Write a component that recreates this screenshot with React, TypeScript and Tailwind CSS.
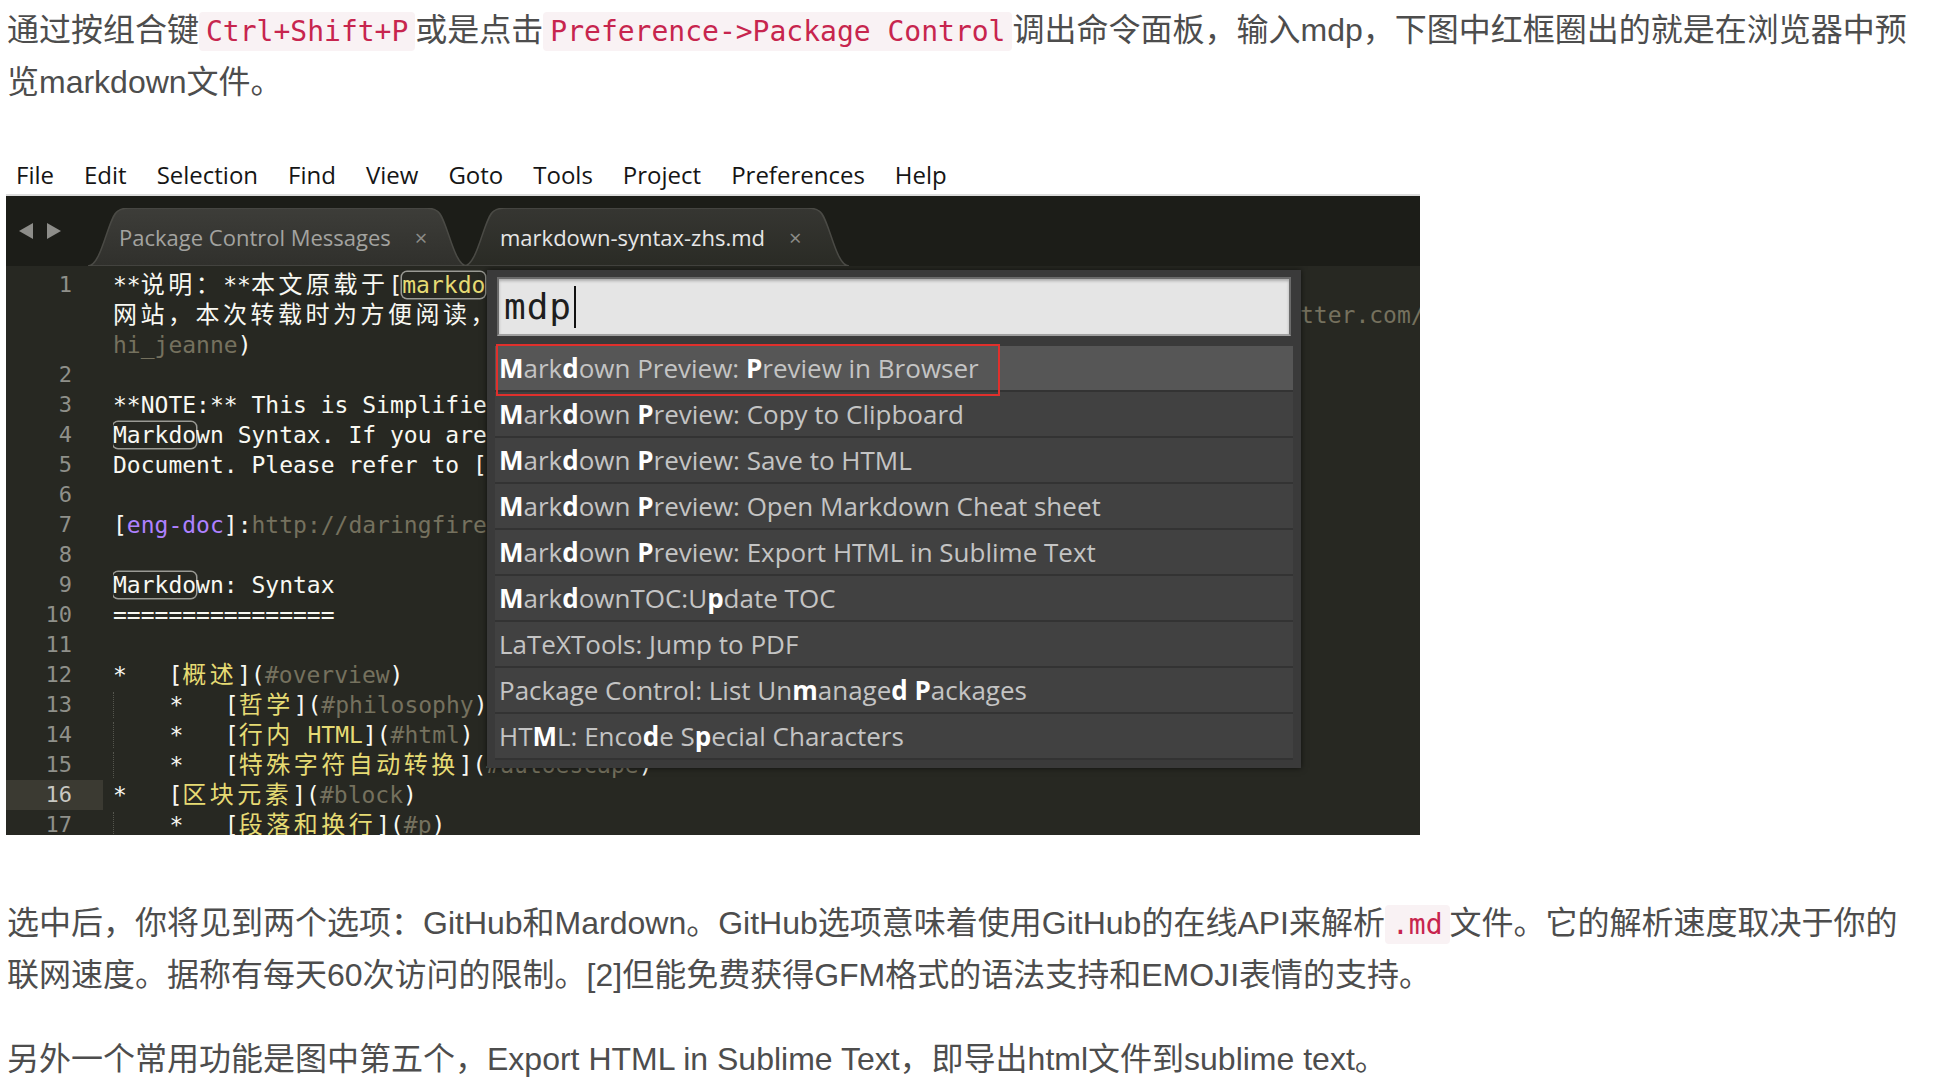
import React from 'react'

const body = "font-['Liberation_Sans','Noto_Sans_CJK_SC',sans-serif]"
const mono = "font-['DejaVu_Sans_Mono','Noto_Sans_CJK_SC',monospace]"
const ui = "font-['Open_Sans','Noto_Sans_CJK_SC',sans-serif]"

const Code = ({ children }: { children: React.ReactNode }) => (
  <code className={`${mono} text-[28px] text-[#c7254e] bg-[#f9f2f4] rounded-[4px] px-[7px] py-[3px]`}>
    {children}
  </code>
)

// split CJK runs so they get the wider advance of the original editor font
const Mixed = ({ text }: { text: string }) => {
  const parts = text.split(/([\u3000-\u9fff\uff00-\uffef]+)/)
  return (
    <>
      {parts.map((p, i) =>
        /[\u3000-\u9fff\uff00-\uffef]/.test(p) ? (
          <span key={i} className="text-[24px] tracking-[3.5px]">{p}</span>
        ) : (
          <span key={i}>{p}</span>
        )
      )}
    </>
  )
}

type Seg = [string, string]

const segClass: Record<string, string> = {
  w: 'text-[#f8f8f2]',
  y: 'text-[#e6db74]',
  g: 'text-[#75715e]',
  p: 'text-[#ae81ff]',
  bw: 'text-[#f8f8f2] rounded-[5px] ring-[1.5px] ring-[#9a9a94]',
  by: 'text-[#e6db74] rounded-[5px] ring-[1.5px] ring-[#9a9a94]',
  ind: 'border-l border-dotted border-[#55564e]',
}

// only the parts of each line not hidden by the palette
const lines: { n: string; segs: Seg[] }[] = [
  { n: '1', segs: [['**说明：**本文原载于[', 'w'], ['markdo', 'by']] },
  { n: '', segs: [['网站，本次转载时为方便阅读，', 'w'], ['', 'fill'], ['tter.com/', 'g']] },
  { n: '', segs: [['hi_jeanne', 'g'], [')', 'w']] },
  { n: '2', segs: [] },
  { n: '3', segs: [['**NOTE:** This is Simplifie', 'w']] },
  { n: '4', segs: [['Markdo', 'bw'], ['wn Syntax. If you are', 'w']] },
  { n: '5', segs: [['Document. Please refer to [', 'w']] },
  { n: '6', segs: [] },
  { n: '7', segs: [['[', 'w'], ['eng-doc', 'p'], [']:', 'w'], ['http://daringfire', 'g']] },
  { n: '8', segs: [] },
  { n: '9', segs: [['Markdo', 'bw'], ['wn: Syntax', 'w']] },
  { n: '10', segs: [['================', 'w']] },
  { n: '11', segs: [] },
  { n: '12', segs: [['*   [', 'w'], ['概述', 'y'], ['](', 'w'], ['#overview', 'g'], [')', 'w']] },
  { n: '13', segs: [['    ', 'ind'], ['*   [', 'w'], ['哲学', 'y'], ['](', 'w'], ['#philosophy', 'g'], [')', 'w']] },
  { n: '14', segs: [['    ', 'ind'], ['*   [', 'w'], ['行内 HTML', 'y'], ['](', 'w'], ['#html', 'g'], [')', 'w']] },
  { n: '15', segs: [['    ', 'ind'], ['*   [', 'w'], ['特殊字符自动转换', 'y'], ['](', 'w'], ['#autoescape', 'g'], [')', 'w']] },
  { n: '16', segs: [['*   [', 'w'], ['区块元素', 'y'], ['](', 'w'], ['#block', 'g'], [')', 'w']] },
  { n: '17', segs: [['    ', 'ind'], ['*   [', 'w'], ['段落和换行', 'y'], ['](', 'w'], ['#p', 'g'], [')', 'w']] },
]

const commands = [
  '{M}ark{d}own Preview: {P}review in Browser',
  '{M}ark{d}own {P}review: Copy to Clipboard',
  '{M}ark{d}own {P}review: Save to HTML',
  '{M}ark{d}own {P}review: Open Markdown Cheat sheet',
  '{M}ark{d}own {P}review: Export HTML in Sublime Text',
  '{M}ark{d}ownTOC:U{p}date TOC',
  'LaTeXTools: Jump to PDF',
  'Package Control: List Un{m}anage{d} {P}ackages',
  'HT{M}L: Enco{d}e S{p}ecial Characters',
]

const Command = ({ spec }: { spec: string }) => (
  <span className="whitespace-pre">
    {spec.split(/(\{[^}]+\})/).map((p, i) =>
      p.startsWith('{') ? (
        <span key={i} className="font-bold text-white">{p.slice(1, -1)}</span>
      ) : (
        <span key={i}>{p}</span>
      )
    )}
  </span>
)

const Tab = ({ width, label, active, textLeft }: { width: number; label: string; active?: boolean; textLeft: number }) => {
  const d = `M0,58 C14,58 20,8 30,3 Q34,0 42,0 L${width - 42},0 Q${width - 34},0 ${width - 30},3 C${width - 20},8 ${width - 14},58 ${width},58 Z`
  return (
    <div className="relative h-[58px] shrink-0" style={{ width }}>
      <svg className="absolute inset-0" width={width} height={58} viewBox={`0 0 ${width} 58`}>
        <defs>
          <linearGradient id={active ? 'tabA' : 'tabI'} x1="0" y1="0" x2="0" y2="1">
            <stop offset="0" stopColor={active ? '#363632' : '#3d3d39'} />
            <stop offset="1" stopColor={active ? '#2a2b25' : '#30302c'} />
          </linearGradient>
        </defs>
        <path d={d} fill={`url(#${active ? 'tabA' : 'tabI'})`} stroke="#4a4a45" strokeWidth="1.5" />
      </svg>
      <div
        className={`relative flex h-full items-center gap-[24px] text-[22px] ${active ? 'text-[#e6e6e6]' : 'text-[#a3a3a0]'}`}
        style={{ paddingLeft: textLeft }}
      >
        <span>{label}</span>
        <span className="text-[22px] text-[#8c8c88]">×</span>
      </div>
    </div>
  )
}

const SublimeShot = () => (
  <div className={`ml-[6px] mt-[47px] w-[1414px] ${ui}`}>
    {/* menu bar */}
    <div className="flex h-[41px] items-center gap-[30px] border-b-2 border-[#dcdcdc] pl-[10px] text-[24px] text-[#151515]">
      {['File', 'Edit', 'Selection', 'Find', 'View', 'Goto', 'Tools', 'Project', 'Preferences', 'Help'].map((m) => (
        <span key={m}>{m}</span>
      ))}
    </div>

    {/* tab strip */}
    <div className="flex h-[70px] items-end bg-[#1c1d18]">
      <div className="flex h-full items-center gap-[10px] pl-[11px] pr-[25px]">
        <svg width="18" height="18" viewBox="0 0 18 18">
          <polygon points="16,1 16,17 2,9" fill="#8d8d89" />
        </svg>
        <svg width="18" height="18" viewBox="0 0 18 18">
          <polygon points="2,1 2,17 16,9" fill="#8d8d89" />
        </svg>
      </div>
      <div className="flex items-end">
        <Tab width={379} label="Package Control Messages" textLeft={31} />
        <div className="-ml-[3px]">
          <Tab width={385} label="markdown-syntax-zhs.md" textLeft={36} active />
        </div>
      </div>
    </div>

    {/* editor */}
    <div className={`relative flex h-[569px] overflow-hidden bg-[#272822] pt-[4px] ${mono}`}>
      <div className="w-[97px] shrink-0">
        {lines.map((l, i) => (
          <div
            key={i}
            className={`h-[30px] pr-[31px] text-right text-[22px] leading-[30px] ${
              l.n === '16' ? 'bg-[#3b3a32] text-[#c8c8c2]' : 'text-[#8f908a]'
            }`}
          >
            {l.n}
          </div>
        ))}
      </div>
      <div className="ml-[10px] flex-1 text-[23px]">
        {lines.map((l, i) => (
          <div key={i} className="h-[30px] overflow-hidden whitespace-pre leading-[30px] text-[#f8f8f2]">
            {l.segs.map(([t, c], j) =>
              c === 'fill' ? (
                <span key={j} className="inline-block w-[802px]" />
              ) : (
                <span key={j} className={segClass[c]}>
                  <Mixed text={t} />
                </span>
              )
            )}
          </div>
        ))}
      </div>

      {/* command palette overlay */}
      <div className="absolute left-[481px] top-[4px] h-[498px] w-[814px] bg-[#3a3a3a] px-[8px] pt-[7px] shadow-[0_0_6px_rgba(0,0,0,0.6)]">
        <div className="mx-[2px] flex h-[59px] items-center border-2 border-[#6b6b6b] border-b-[#a0a0a0] bg-[#e5e5e5] pl-[5px] text-[36px] text-[#1e1e1e] shadow-[inset_0_2px_3px_rgba(0,0,0,0.25)]">
          <span className="tracking-[1px]">mdp</span>
          <span className="ml-[2px] h-[42px] w-[2px] bg-[#111]" />
        </div>
        <div className={`mt-[10px] ${ui} text-[26px] text-[#c4c4c4]`}>
          {commands.map((c, i) => (
            <div
              key={i}
              className={`flex h-[46px] items-center whitespace-nowrap border-b-2 border-[#333333] pl-[4px] ${
                i === 0 ? 'bg-[#565656]' : 'bg-[#414141]'
              }`}
            >
              <Command spec={c} />
            </div>
          ))}
        </div>
        <div className="absolute left-[9px] top-[74px] h-[52px] w-[504px] border-2 border-[#e0302c]" />
      </div>
    </div>
  </div>
)

export default function App() {
  return (
    <div className={`h-[1088px] w-[1934px] overflow-hidden bg-white ${body} text-[#4d4d4d]`}>
      <p className="whitespace-nowrap pl-[7px] pt-[5px] text-[32px] leading-[51px]">
        通过按组合键<Code>Ctrl+Shift+P</Code>或是点击<Code>Preference-&gt;Package Control</Code>调出命令面板，输入mdp，下图中红框圈出的就是在浏览器中预
        <br />
        览markdown文件。
      </p>

      <SublimeShot />

      <p className="mt-[63px] whitespace-nowrap pl-[7px] text-[32px] leading-[51px]">
        选中后，你将见到两个选项：GitHub和Mardown。GitHub选项意味着使用GitHub的在线API来解析<Code>.md</Code>文件。它的解析速度取决于你的
        <br />
        联网速度。据称有每天60次访问的限制。[2]但能免费获得GFM格式的语法支持和EMOJI表情的支持。
      </p>
      <p className="mt-[33px] whitespace-nowrap pl-[7px] text-[32px] leading-[51px]">
        另外一个常用功能是图中第五个，Export HTML in Sublime Text，即导出html文件到sublime text。
      </p>
    </div>
  )
}
